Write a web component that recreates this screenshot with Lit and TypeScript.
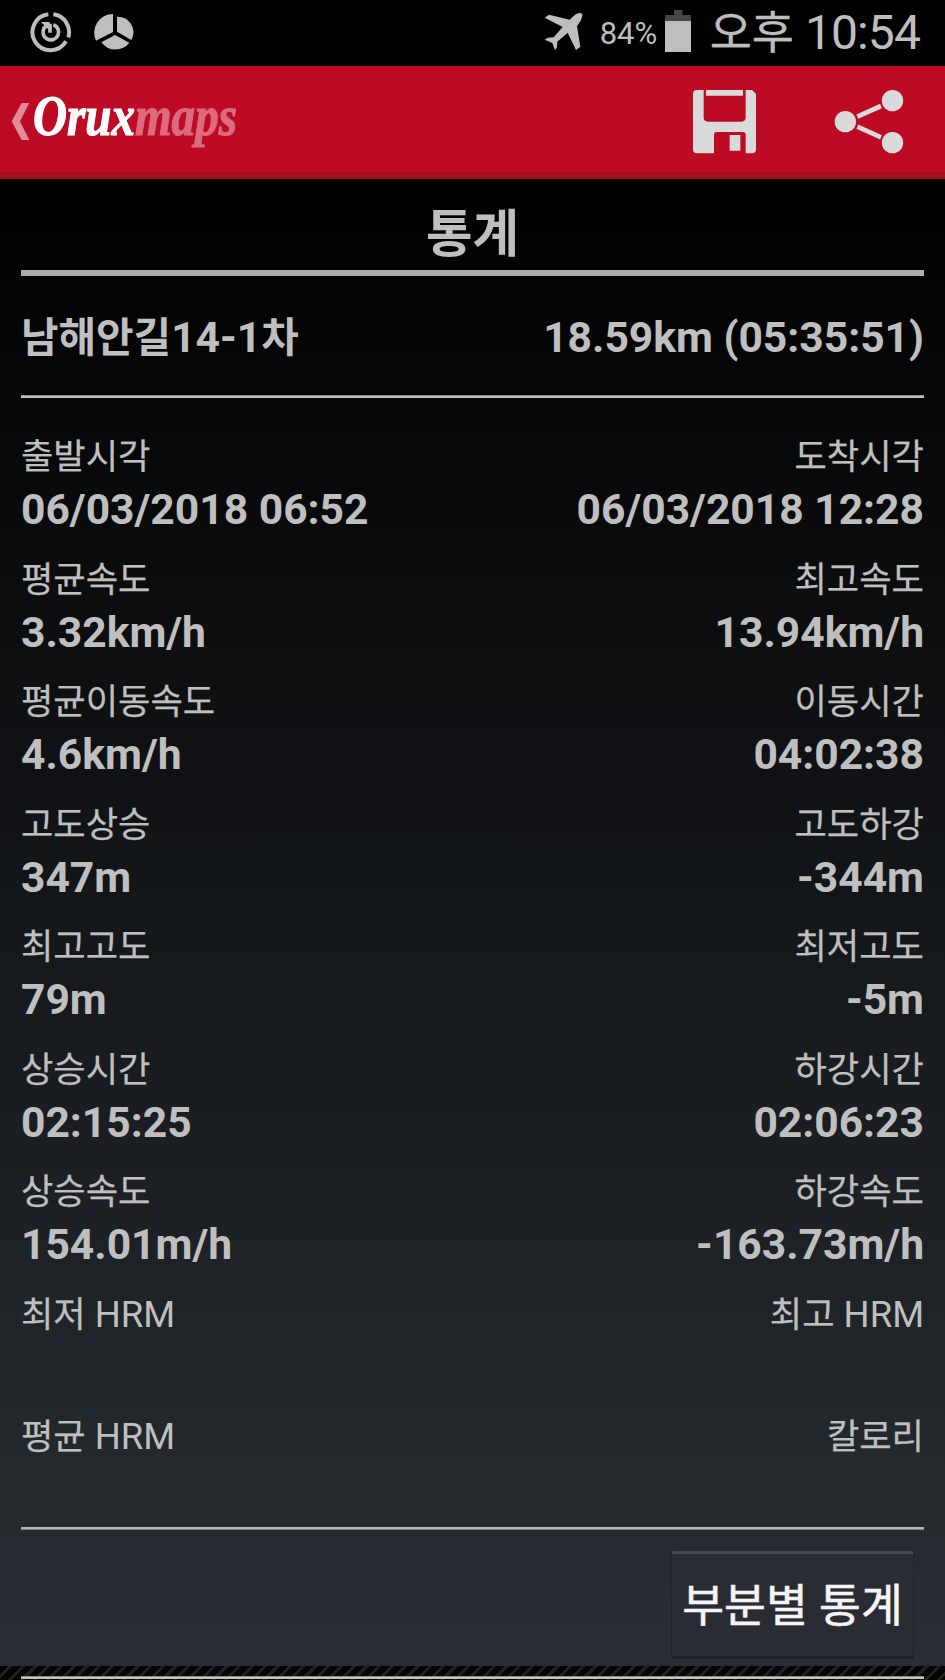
import { LitElement, html, css } from "lit";
import { customElement, property } from "lit/decorators.js";

type Stat = { label: string; value: string };

const ROWS: [Stat, Stat][] = [
  [{ label: "출발시각", value: "06/03/2018 06:52" }, { label: "도착시각", value: "06/03/2018 12:28" }],
  [{ label: "평균속도", value: "3.32km/h" }, { label: "최고속도", value: "13.94km/h" }],
  [{ label: "평균이동속도", value: "4.6km/h" }, { label: "이동시간", value: "04:02:38" }],
  [{ label: "고도상승", value: "347m" }, { label: "고도하강", value: "-344m" }],
  [{ label: "최고고도", value: "79m" }, { label: "최저고도", value: "-5m" }],
  [{ label: "상승시간", value: "02:15:25" }, { label: "하강시간", value: "02:06:23" }],
  [{ label: "상승속도", value: "154.01m/h" }, { label: "하강속도", value: "-163.73m/h" }],
  [{ label: "최저 HRM", value: "" }, { label: "최고 HRM", value: "" }],
  [{ label: "평균 HRM", value: "" }, { label: "칼로리", value: "" }],
];

// Hangul runs are set slightly smaller than the Latin runs beside them.
const mixed = (text: string) =>
  text
    .split(/([\u3131-\uD79D]+)/)
    .filter((part) => part)
    .map((part) => (/[\u3131-\uD79D]/.test(part) ? html`<span class="ko">${part}</span>` : part));

@customElement("status-bar")
class StatusBar extends LitElement {
  static styles = css`
    :host { display: flex; height: 66px; background: #000; color: #bebebe; padding: 0 25px 0 30px; box-sizing: border-box; justify-content: space-between; white-space: nowrap; }
    .side { display: flex; }
    svg { display: block; flex: none; }
    .sync { margin-top: 11px; }
    .pie { margin: 13px 0 0 22px; }
    .plane { margin-top: 12px; }
    .battery { margin: 10px 0 0 8px; }
    .percent { font-size: 31px; line-height: 68px; margin-left: 16px; width: 57px; }
    .clock { font-size: 48px; line-height: 66px; margin-left: 19px; letter-spacing: -0.9px; }
    .ko { font-size: 45.8px; letter-spacing: 0; -webkit-text-stroke: 0.3px #bebebe; }
  `;
  render() {
    return html`
      <div class="side">
        <svg class="sync" width="42" height="42" viewBox="90 33 126 126" fill="none" stroke="#bebebe">
          <path stroke-width="12" d="M145 43A54 54 0 1 0 198 124M160 43A54 54 0 0 1 205 112" />
          <path stroke-width="11" d="M133 83A23.500 23.500 0 1 0 160 74M150 71V98" />
          <path fill="#bebebe" stroke="none" d="M122 66H149V92L141 84L133 90L126 82L133 76Z" />
        </svg>
        <svg class="pie" width="40" height="38" viewBox="282 39 120 114" fill="#bebebe">
          <path d="M339 42V96L288 122A56 56 0 0 1 339 42Z" />
          <path d="M351 50A47 47 0 0 1 394 120L351 95Z" />
          <path d="M345 105L388 128A52 52 0 0 1 304 127Z" />
        </svg>
      </div>
      <div class="side">
        <svg class="plane" width="40" height="40" viewBox="74 36 120 120" fill="#bebebe">
          <path d="M189 41Q179 36 167 44L151 59L89 44L76 53L130 81L103 112L85 113L76 119L99 129L107 151L113 142L114 125L145 98L170 150L183 140L173 79L184 62Q190 51 189 41Z" />
        </svg>
        <span class="percent">84%</span>
        <svg class="battery" width="26" height="42" viewBox="0 0 26 42">
          <path fill="#464646" d="M9 0H17.500V5H26V11H0V5H9Z" />
          <path fill="#bebebe" d="M0 11H26V42H0Z" />
        </svg>
        <span class="clock">${mixed("오후 10:54")}</span>
      </div>
    `;
  }
}

@customElement("action-bar")
class ActionBar extends LitElement {
  static styles = css`
    :host { display: flex; height: 113px; box-sizing: border-box; background: #bd0a25; border-bottom: 7px solid #a30f20; justify-content: space-between; padding: 0 41px 0 10px; }
    .brand, .actions { display: flex; }
    svg { display: block; flex: none; }
    .back { margin-top: 36px; }
    .logo { margin-top: 4px; overflow: visible; }
    .logo text { font-family: "Liberation Serif", serif; font-weight: bold; font-style: italic; }
    .save { margin-top: 23px; }
    .share { margin: 23px 0 0 77px; }
  `;
  render() {
    return html`
      <div class="brand">
        <svg class="back" width="20" height="40" viewBox="30 306 60 120">
          <path fill="#e18a98" d="M65 309H88L60 364L88 420H65L35 364Z" />
        </svg>
        <svg class="logo" width="216" height="90" viewBox="30 70 216 90">
          <text x="33" y="135" font-size="58" textLength="204" lengthAdjust="spacingAndGlyphs" stroke-width="1.200"><tspan fill="#fff" stroke="#fff">Orux</tspan><tspan fill="#db6b7d" stroke="#db6b7d">maps</tspan></text>
        </svg>
      </div>
      <div class="actions">
        <svg class="save" width="65" height="65" viewBox="516 267 195 195" fill="#dadada">
          <path fill-rule="evenodd" d="M531 270H551V352Q551 365 564 365H664Q677 365 677 352V270H696L708 282V448Q708 460 696 460H677V404Q677 396 669 396H590Q582 396 582 404V460H531Q519 460 519 448V282Q519 270 531 270Z" />
          <path d="M558 270H669V287H558ZM629 405H661V452H629Z" />
        </svg>
        <svg class="share" width="70" height="65" viewBox="942 267 210 195" fill="#dadada">
          <circle cx="976" cy="365" r="32" />
          <circle cx="1117.500" cy="302" r="32" />
          <circle cx="1117.500" cy="428" r="32" />
          <path stroke="#dadada" stroke-width="14" d="M1012 350L1083 318M1012 380L1083 412" />
        </svg>
      </div>
    `;
  }
}

@customElement("stat-cell")
class StatCell extends LitElement {
  @property() label = "";
  @property() value = "";
  static styles = css`
    :host { display: flex; flex-direction: column; height: 122.5px; white-space: nowrap; }
    .label { font-size: 36.5px; line-height: 50px; }
    .ko { font-size: 35.2px; -webkit-text-stroke: 0.25px #bfbfbf; }
    .value { font-size: 42.6px; line-height: 54px; font-weight: 700; }
  `;
  render() {
    return html`<div class="label">${mixed(this.label)}</div><div class="value">${this.value}</div>`;
  }
}

@customElement("app-root")
class AppRoot extends LitElement {
  static styles = css`
    :host { display: flex; flex-direction: column; width: 945px; height: 1680px; overflow: hidden; background: #000; color: #bfbfbf; font-family: Roboto, "Noto Sans CJK KR", sans-serif; }
    status-bar, action-bar { flex: none; }
    .page { flex: none; height: 1487px; box-sizing: border-box; padding: 0 21px; background: linear-gradient(#000, #0d0f11 33%, #1b1f23 66%, #242a2e 90%, #292d36); display: flex; flex-direction: column; }
    .title { height: 91px; line-height: 111px; text-align: center; font-size: 50.6px; font-weight: 700; }
    .thick { flex: none; height: 6px; background: #acacac; }
    .thin { flex: none; height: 3px; background: linear-gradient(#8b8b8b 1px, #c3c3c3 1px); }
    .thin.lower { background: linear-gradient(#b4b6b7 2px, #7c8081 2px); }
    .track { height: 119px; flex: none; display: flex; justify-content: space-between; font-size: 42.6px; line-height: 122px; font-weight: 700; white-space: nowrap; }
    .track .ko { font-size: 40.8px; }
    .stats { height: 1129px; flex: none; box-sizing: border-box; padding-top: 34px; display: flex; flex-direction: column; }
    .row { display: flex; justify-content: space-between; }
    .right { text-align: right; }
    .foot { display: flex; justify-content: flex-end; padding: 21px 10px 0 0; }
    .button { font: inherit; width: 243px; height: 108px; box-sizing: border-box; padding: 0 0 6px; border: 1px solid #20242a; border-top: 3px solid #45494e; border-bottom: 3px solid #1c1f23; border-radius: 4px; background: #292d33; color: #f4f4f4; font-size: 45.5px; font-weight: 400; -webkit-text-stroke: 0.6px #f4f4f4; white-space: nowrap; }
    .stripes { flex: 1; padding: 10px 21px 0; background: repeating-linear-gradient(135deg, #050505 0 6px, #202020 6px 9px); }
  `;
  render() {
    return html`
      <status-bar></status-bar>
      <action-bar></action-bar>
      <main class="page">
        <div class="title">통계</div>
        <div class="thick"></div>
        <div class="track"><span>${mixed("남해안길14-1차")}</span><span>18.59km (05:35:51)</span></div>
        <div class="thin"></div>
        <div class="stats">
          ${ROWS.map(
            ([a, b]) => html`<div class="row">
              <stat-cell .label=${a.label} .value=${a.value}></stat-cell>
              <stat-cell class="right" .label=${b.label} .value=${b.value}></stat-cell>
            </div>`
          )}
        </div>
        <div class="thin lower"></div>
        <div class="foot"><button class="button">부분별 통계</button></div>
      </main>
      <div class="stripes"><div class="thin"></div></div>
    `;
  }
}
